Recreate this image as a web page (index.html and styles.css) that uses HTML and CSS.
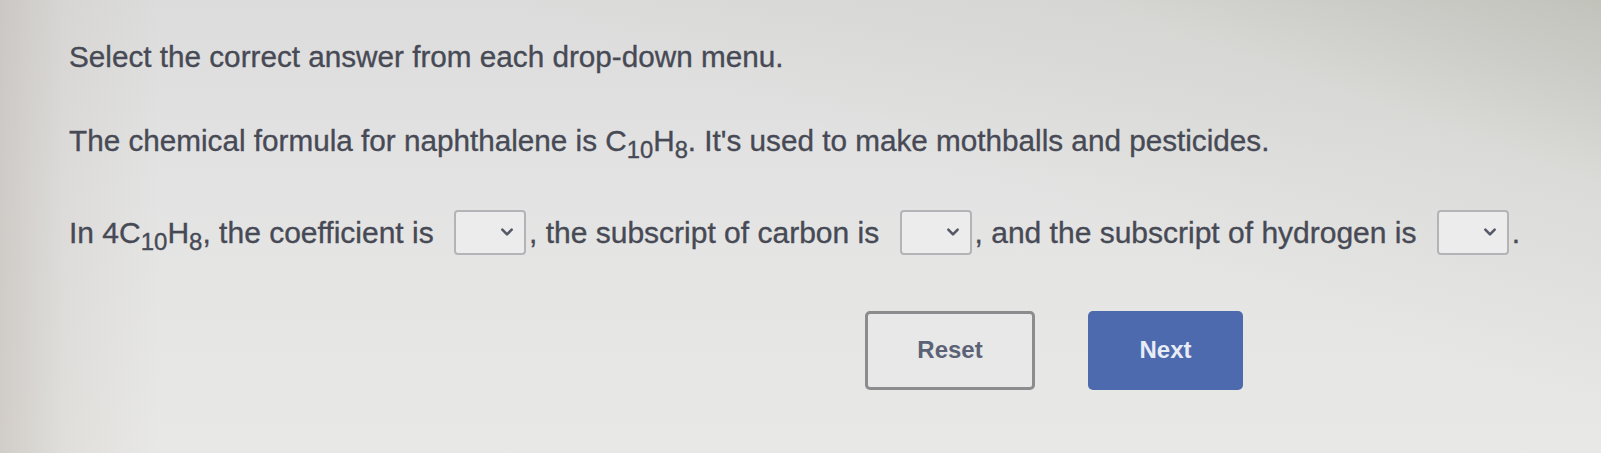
FILE: index.html
```html
<!DOCTYPE html>
<html lang="en">
<head>
    <meta charset="UTF-8">
    <title>Select the correct answer</title>
    <link rel="stylesheet" href="styles.css">
</head>
<body>
    <div class="question">
        <p class="prompt">Select the correct answer from each drop-down menu.</p>

        <p class="intro">The chemical formula for naphthalene is C<sub>10</sub>H<sub>8</sub>. It's used to make mothballs and pesticides.</p>

        <p class="fill">In 4C<sub>10</sub>H<sub>8</sub>, the coefficient is <span class="drop"><svg viewBox="0 0 12 8"><path d="M2 2 L6 6 L10 2"/></svg></span>, the subscript of carbon is <span class="drop"><svg viewBox="0 0 12 8"><path d="M2 2 L6 6 L10 2"/></svg></span>, and the subscript of hydrogen is <span class="drop"><svg viewBox="0 0 12 8"><path d="M2 2 L6 6 L10 2"/></svg></span>.</p>

        <div class="actions">
            <button class="btn btn-reset">Reset</button>
            <button class="btn btn-next">Next</button>
        </div>
    </div>
</body>
</html>
```

FILE: styles.css
```css
* {
    margin: 0;
    padding: 0;
    box-sizing: border-box;
}

body {
    font-family: "Liberation Sans", Arial, sans-serif;
    color: #474a55;
    height: 453px;
    overflow: hidden;
    background:
        linear-gradient(90deg, rgba(190, 182, 175, 0.55) 0%, rgba(200, 195, 188, 0.25) 4%, rgba(220, 220, 215, 0) 10%),
        linear-gradient(200deg, rgba(175, 178, 165, 0.6) 0%, rgba(200, 200, 192, 0.3) 18%, rgba(228, 228, 228, 0) 40%),
        linear-gradient(180deg, #dcdcdc 0%, #e3e3e3 40%, #e8e8e6 100%);
}

.question {
    padding: 40px 0 0 69px;
    -webkit-text-stroke: 0.35px currentColor;
}

.prompt,
.intro {
    font-size: 29.7px;
    line-height: 34px;
}

.intro {
    margin-top: 50px;
}

.fill {
    font-size: 30px;
    line-height: 46px;
    margin-top: 52px;
    white-space: nowrap;
}

sub {
    font-size: 0.8em;
    vertical-align: -0.3em;
    line-height: 0;
}

.drop {
    display: inline-flex;
    align-items: center;
    justify-content: flex-end;
    vertical-align: middle;
    width: 72px;
    height: 45px;
    margin: 0 3px 0 12px;
    border: 2px solid #b4b4b8;
    border-radius: 4px;
    background: #ececec;
    padding-right: 10px;
    position: relative;
    top: -3px;
}

.drop svg {
    width: 14px;
    height: 10px;
    fill: none;
    stroke: #555866;
    stroke-width: 2.2;
    stroke-linecap: round;
    stroke-linejoin: round;
}

.actions {
    display: flex;
    gap: 53px;
    margin-top: 53px;
    padding-left: 796px;
    -webkit-text-stroke: 0;
}

.btn {
    font-family: "Liberation Sans", Arial, sans-serif;
    font-size: 24px;
    font-weight: bold;
    height: 79px;
    border-radius: 5px;
    cursor: pointer;
}

.btn-reset {
    width: 170px;
    background: #e8e8e8;
    border: 3px solid #8c8c8e;
    color: #5b6276;
}

.btn-next {
    width: 155px;
    background: #4d6aae;
    border: none;
    color: #e8ecf5;
}
```
